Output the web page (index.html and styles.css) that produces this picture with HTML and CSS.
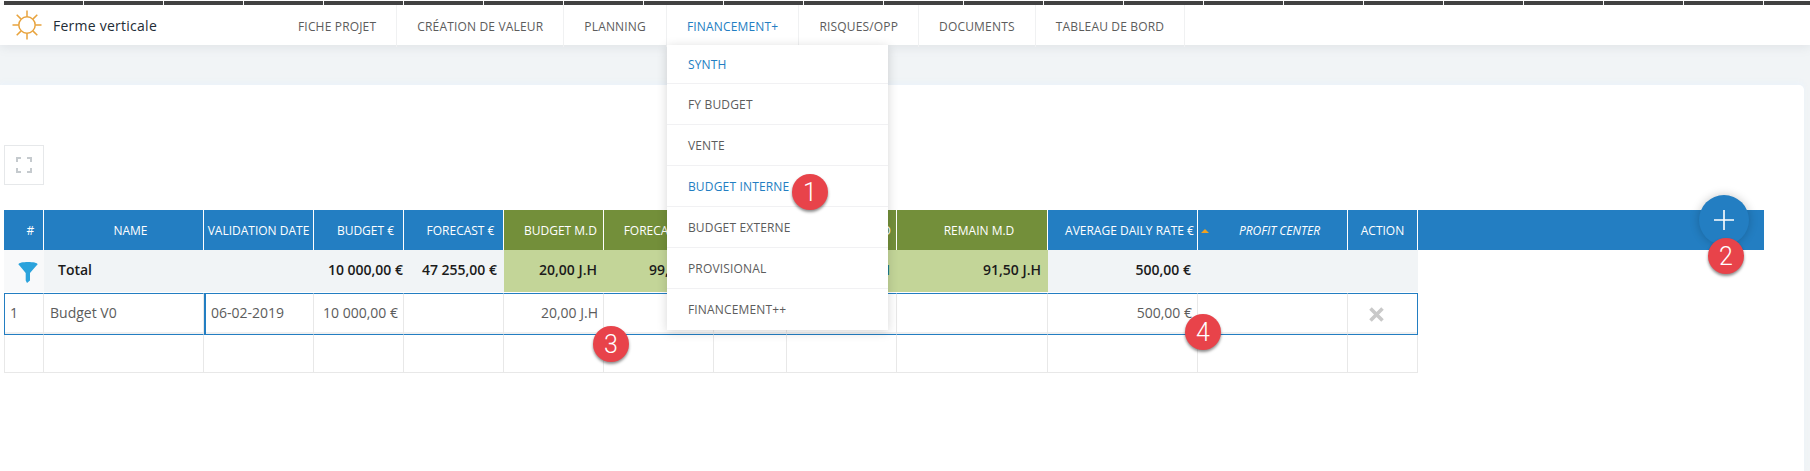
FILE: index.html
```html
<!DOCTYPE html>
<html lang="fr">
<head>
<meta charset="utf-8">
<title>Ferme verticale</title>
<link rel="stylesheet" href="styles.css">
</head>
<body>
<div class="app">
  <div class="topbar"></div>
  <header class="header">
    <div class="brand">
      <svg class="sun" width="32" height="32" viewBox="0 0 32 32" fill="none" stroke="#e8a33d" stroke-width="1.5">
        <circle cx="16" cy="16" r="8.2"/>
        <path d="M16 1.5v6M16 24.5v6M1.5 16h6M24.500 16h6M5.700 5.700l4.200 4.200M22.100 22.100l4.200 4.200M5.700 26.300l4.200-4.200M22.100 9.900l4.200-4.200"/>
      </svg>
      <span class="brand-name">Ferme verticale</span>
    </div>
    <nav class="nav">
      <a class="nav-item">Fiche projet</a>
      <a class="nav-item">Création de valeur</a>
      <a class="nav-item">Planning</a>
      <div class="nav-item nav-active">Financement+
        <ul class="menu">
          <li class="menu-item menu-active">Synth</li>
          <li class="menu-item">FY Budget</li>
          <li class="menu-item">Vente</li>
          <li class="menu-item menu-active">Budget interne</li>
          <li class="menu-item">Budget externe</li>
          <li class="menu-item">Provisional</li>
          <li class="menu-item">Financement++</li>
        </ul>
      </div>
      <a class="nav-item">Risques/Opp</a>
      <a class="nav-item">Documents</a>
      <a class="nav-item">Tableau de bord</a>
    </nav>
  </header>
  <main class="panel">
    <button class="expand" type="button" aria-label="Plein écran">
      <svg width="16" height="16" viewBox="0 0 16 16" fill="none" stroke="#c5cace" stroke-width="2">
        <path d="M1 5V1h4M11 1h4v4M15 11v4h-4M5 15H1v-4"/>
      </svg>
    </button>
    <div class="grid-head-bar">
      <table class="grid">
        <colgroup>
          <col class="c-num"><col class="c-name"><col class="c-date"><col class="c-budget"><col class="c-fore">
          <col class="c-bmd"><col class="c-fmd"><col class="c-x"><col class="c-cmd"><col class="c-rmd">
          <col class="c-adr"><col class="c-pc"><col class="c-act">
        </colgroup>
        <thead>
          <tr>
            <th>#</th>
            <th>Name</th>
            <th class="th-plain">Validation date</th>
            <th>Budget €</th>
            <th>Forecast €</th>
            <th class="th-green">Budget M.D</th>
            <th class="th-green">Forecast M.D</th>
            <th class="th-green">Gap</th>
            <th class="th-green th-right">Real M.D</th>
            <th class="th-green">Remain M.D</th>
            <th>Average daily rate €</th>
            <th class="th-sort"><span class="caret"></span><em>Profit center</em></th>
            <th class="th-plain">Action</th>
          </tr>
        </thead>
        <tbody>
          <tr class="row-total">
            <td class="td-filter">
              <svg width="20" height="21" viewBox="0 0 20 21" fill="#2ba3dc">
                <path d="M0.500 2.200C0.500 0.800 5 0 10 0s9.500 0.800 9.500 2.200c0 0.500-0.400 1-1 1.400L12 11v7.500L9 21l-1.300-2.500V11L1.500 3.600c-0.600-0.400-1-0.900-1-1.400z"/>
              </svg>
            </td>
            <td class="td-total-label" colspan="2">Total</td>
            <td class="num num-tight">10 000,00 €</td>
            <td class="num">47 255,00 €</td>
            <td class="num td-green">20,00 J.H</td>
            <td class="num td-green">99,50 J.H</td>
            <td class="num td-green"></td>
            <td class="num td-green td-teal">8,00 J.H</td>
            <td class="num td-green">91,50 J.H</td>
            <td class="num">500,00 €</td>
            <td></td>
            <td></td>
          </tr>
          <tr class="row-data">
            <td>1</td>
            <td>Budget V0</td>
            <td class="td-date">06-02-2019</td>
            <td class="num">10 000,00 €</td>
            <td></td>
            <td class="num">20,00 J.H</td>
            <td></td>
            <td></td>
            <td></td>
            <td></td>
            <td class="num">500,00 €</td>
            <td></td>
            <td class="td-action">
              <svg width="15" height="15" viewBox="0 0 15 15" fill="none" stroke="#c9c9c9" stroke-width="3.600">
                <path d="M1.500 1.500l12 12M13.500 1.500l-12 12"/>
              </svg>
            </td>
          </tr>
          <tr class="row-empty">
            <td></td><td></td><td></td><td></td><td></td><td></td><td></td><td></td><td></td><td></td><td></td><td></td><td></td>
          </tr>
        </tbody>
      </table>
    </div>
  </main>
  <button class="fab" type="button" aria-label="Ajouter">
    <svg width="20" height="20" viewBox="0 0 20 20" fill="none" stroke="#fff" stroke-width="1.600">
      <path d="M10 0v20M0 10h20"/>
    </svg>
  </button>
  <span class="badge badge-1">1</span>
  <span class="badge badge-2">2</span>
  <span class="badge badge-3">3</span>
  <span class="badge badge-4">4</span>
</div>
</body>
</html>
```
FILE: styles.css
```css
* { box-sizing: border-box; }
html, body { margin: 0; padding: 0; }
body {
  background: #f1f4f6;
  font-family: "Open Sans", "Liberation Sans", sans-serif;
  overflow: hidden;
}
.app { position: relative; height: 471px; overflow: hidden; }

.topbar {
  height: 5px;
  background-color: #fff;
  background-image: repeating-linear-gradient(90deg, #404040 0, #404040 79px, #fff 79px, #fff 80px);
  background-position: 4px 1px;
  background-size: 100% 4px;
  background-repeat: no-repeat;
}

.header {
  position: relative;
  z-index: 3;
  display: flex;
  height: 40px;
  background: #fff;
  box-shadow: 0 2px 10px rgba(120, 130, 140, .14);
}
.brand { display: flex; align-items: center; width: 278px; padding-left: 11px; }
.sun { flex: none; }
.brand-name { margin-left: 10px; font-size: 14px; font-weight: 500; letter-spacing: .25px; color: #222c36; }
.nav { display: flex; }
.nav-item {
  position: relative;
  display: flex;
  align-items: center;
  height: 42px;
  padding: 0 20px;
  border-right: 1px solid #f0f1f2;
  font-size: 12px;
  font-weight: 500;
  letter-spacing: .17px;
  text-transform: uppercase;
  color: #5c5c5c;
  white-space: nowrap;
}
.nav-active { color: #237ec2; }

.menu {
  position: absolute;
  top: 40px;
  left: 0;
  width: 221px;
  margin: 0;
  padding: 0;
  list-style: none;
  background: #fff;
  box-shadow: 0 2px 10px rgba(0, 0, 0, .16);
}
.menu-item {
  display: flex;
  align-items: center;
  height: 41px;
  padding-left: 21px;
  border-bottom: 1px solid #f1f1f3;
  color: #5c5c5c;
}
.menu-item:first-child { height: 39px; }
.menu-item:last-child { border-bottom: 0; }
.menu-active { color: #237ec2; }

.panel {
  height: 386px;
  margin-top: 40px;
  margin-right: 6px;
  padding-top: 60px;
  background: #fff;
  border-top-right-radius: 5px;
  box-shadow: 0 -3px 4px rgba(235, 243, 250, .8);
}
.expand {
  display: flex;
  align-items: center;
  justify-content: center;
  width: 40px;
  height: 40px;
  margin: 0 0 25px 4px;
  padding: 0;
  background: #fff;
  border: 1px solid #e6e8ea;
}

.grid-head-bar {
  position: relative;
  width: 1760px;
  margin-left: 4px;
  background: linear-gradient(#237ec2 40px, transparent 40px);
}
.grid {
  width: 1414px;
  table-layout: fixed;
  border-collapse: separate;
  border-spacing: 0;
  font-size: 14px;
}
.c-num { width: 40px; }
.c-name { width: 160px; }
.c-date { width: 110px; }
.c-budget { width: 90px; }
.c-fore { width: 100px; }
.c-bmd { width: 100px; }
.c-fmd { width: 110px; }
.c-x { width: 73px; }
.c-cmd { width: 110px; }
.c-rmd { width: 151px; }
.c-adr { width: 150px; }
.c-pc { width: 150px; }
.c-act { width: 70px; }

.grid th {
  position: relative;
  height: 40px;
  padding: 0 0 0 14px;
  background: #237ec2;
  border-right: 1px solid #fff;
  color: #fff;
  font-size: 12px;
  font-weight: 400;
  text-transform: uppercase;
  white-space: nowrap;
}
.grid th.th-plain { padding: 0; }
.grid th.th-green { background: #738f3a; }
.grid th.th-right { padding: 0 5px 0 0; text-align: right; }
.grid th em { font-style: italic; }
.caret {
  position: absolute;
  top: 19px;
  left: 3px;
  border-left: 4px solid transparent;
  border-right: 4px solid transparent;
  border-bottom: 4px solid #f0a11f;
}

.grid td { padding: 0 7px 4px; white-space: nowrap; overflow: visible; }
.num { text-align: right; }

.row-total td {
  height: 43px;
  background: #f1f4f6;
  border-bottom: 1px solid #fff;
  color: #1b1b1b;
  font-weight: 600;
}
.row-total .td-filter { padding: 3px 0 0 14px; background: #f8f9fa; }
.row-total .td-filter svg { display: block; }
.row-total .td-total-label { padding-left: 14px; }
.row-total .td-green { background: #c3d598; }
.row-total .td-teal { color: #14607f; }
.row-total .num-tight { padding-right: 1px; }

.row-data td {
  height: 42px;
  background: #fff;
  border-top: 1px solid #237ec2;
  border-bottom: 1px solid #237ec2;
  border-right: 1px solid #e8e8e8;
  box-shadow: inset 0 -2px 0 #f0f0f0;
  color: #5c5c5c;
}
.row-data td:first-child { border-left: 1px solid #237ec2; padding-left: 5px; }
.row-data td:nth-child(2) { padding-left: 6px; }
.row-data td:last-child { border-right: 1px solid #237ec2; }
.row-data .td-date { border-left: 2px solid #237ec2; padding-left: 5px; }
.row-data .num { padding-right: 5px; }
.row-data .td-action { padding: 0 0 0 21px; }
.td-action svg { display: block; }

.row-empty td {
  height: 38px;
  border-right: 1px solid #e8e8e8;
  border-bottom: 1px solid #e8e8e8;
}
.row-empty td:first-child { border-left: 1px solid #e8e8e8; }

.fab {
  position: absolute;
  z-index: 5;
  top: 195px;
  left: 1699px;
  display: flex;
  align-items: center;
  justify-content: center;
  width: 50px;
  height: 50px;
  padding: 0;
  background: #237ec2;
  border: 0;
  border-radius: 50%;
  box-shadow: 0 0 10px rgba(0, 0, 0, .22);
}
.badge {
  position: absolute;
  z-index: 6;
  display: flex;
  align-items: center;
  justify-content: center;
  width: 36px;
  height: 36px;
  background: #e8434a;
  border-radius: 50%;
  box-shadow: 0 2px 3px rgba(0, 0, 0, .45);
  color: #fff;
  font-family: Roboto, "Liberation Sans", sans-serif;
  font-size: 25px;
  font-weight: 300;
}
.badge-1 { top: 174px; left: 792px; }
.badge-2 { top: 238px; left: 1708px; }
.badge-3 { top: 326px; left: 593px; }
.badge-4 { top: 314px; left: 1185px; }
```
